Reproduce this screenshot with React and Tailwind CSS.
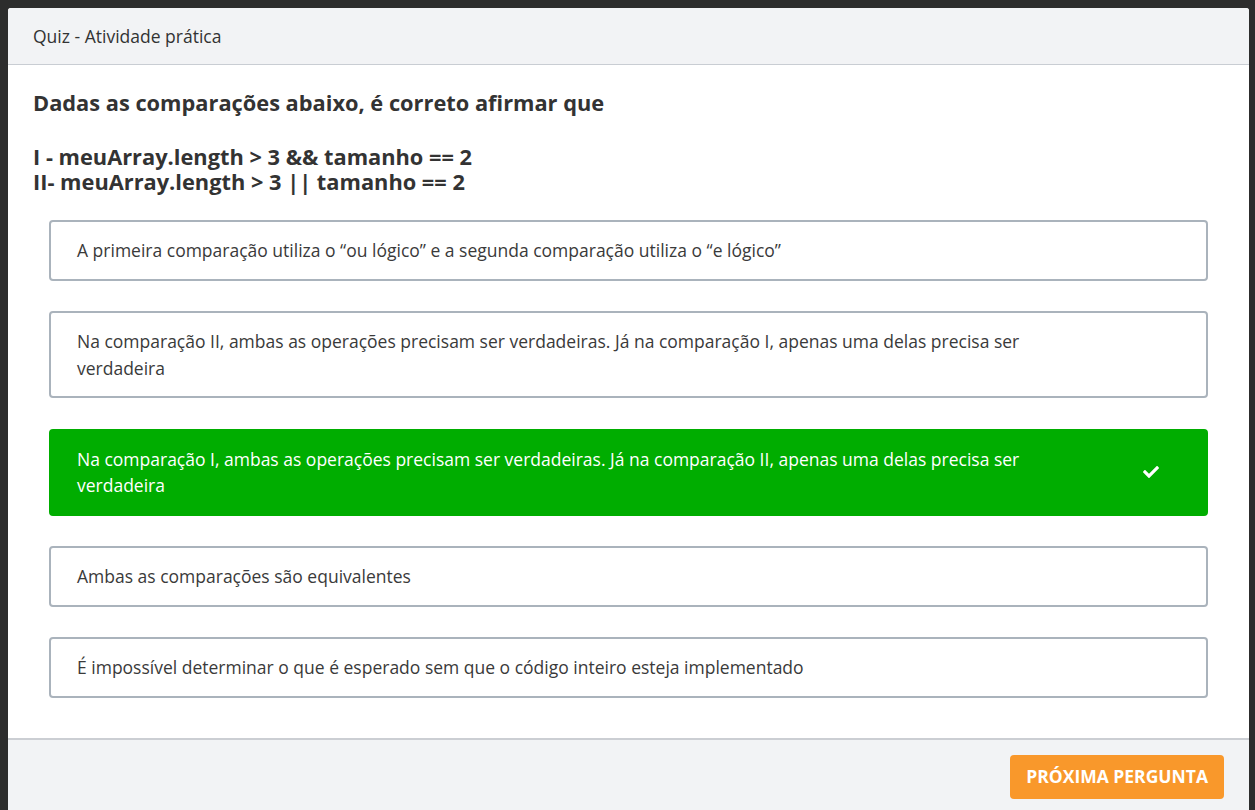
import { FaCheck } from 'react-icons/fa';

const options = [
  { text: 'A primeira comparação utiliza o “ou lógico” e a segunda comparação utiliza o “e lógico”', correct: false },
  { text: 'Na comparação II, ambas as operações precisam ser verdadeiras. Já na comparação I, apenas uma delas precisa ser verdadeira', correct: false },
  { text: 'Na comparação I, ambas as operações precisam ser verdadeiras. Já na comparação II, apenas uma delas precisa ser verdadeira', correct: true },
  { text: 'Ambas as comparações são equivalentes', correct: false },
  { text: 'É impossível determinar o que é esperado sem que o código inteiro esteja implementado', correct: false },
];

export default function App() {
  return (
    <div
      className="h-[810px] overflow-hidden bg-[#2d2d2d] pt-2 px-[6px]"
      style={{ fontFamily: '"Open Sans", "Noto Sans", sans-serif' }}
    >
      <div className="ml-[2px] w-[1241px] h-[820px] bg-white rounded-t-[3px] overflow-hidden flex flex-col">
        {/* Header */}
        <div className="h-[57px] shrink-0 bg-[#f2f3f5] border-b border-[#c9cdd3] flex items-center px-[25px]">
          <h1 className="text-[17.5px] text-[#333]">Quiz - Atividade prática</h1>
        </div>

        {/* Body */}
        <div className="pt-[25px] px-[25px] pb-[40px] text-[#333]">
          <p className="text-[21.8px] font-bold leading-[26px] mb-[28px]">
            Dadas as comparações abaixo, é correto afirmar que
          </p>
          <div className="text-[21.8px] font-bold leading-[25px] mb-[26px]">
            <p>I - meuArray.length &gt; 3 &amp;&amp; tamanho == 2</p>
            <p>II- meuArray.length &gt; 3 || tamanho == 2</p>
          </div>

          <div className="ml-4 mr-4 flex flex-col gap-[30.5px]">
            {options.map((opt, i) => (
              <div
                key={i}
                className={`flex items-center rounded-[4px] border-2 pl-[26px] pr-[26px] py-[15px] ${
                  opt.correct
                    ? 'bg-[#00ad00] border-[#00ad00] text-white'
                    : 'bg-white border-[#aab3bc] text-[#3a3a3a]'
                }`}
              >
                <p className="flex-1 pr-[60px] text-[17.5px] leading-[26.5px]">{opt.text}</p>
                <div className="w-[58px] shrink-0 flex justify-center">
                  {opt.correct && <FaCheck className="w-[16px] h-[16px] text-white" />}
                </div>
              </div>
            ))}
          </div>
        </div>

        {/* Footer */}
        <div className="flex-1 bg-[#f2f3f5] border-t-2 border-[#cbced3] flex justify-end items-start pt-[15px] px-[25px]">
          <button className="h-[44px] px-[16px] rounded-[4px] bg-[#f9982b] text-white text-[17.5px] font-bold uppercase">
            Próxima Pergunta
          </button>
        </div>
      </div>
    </div>
  );
}
